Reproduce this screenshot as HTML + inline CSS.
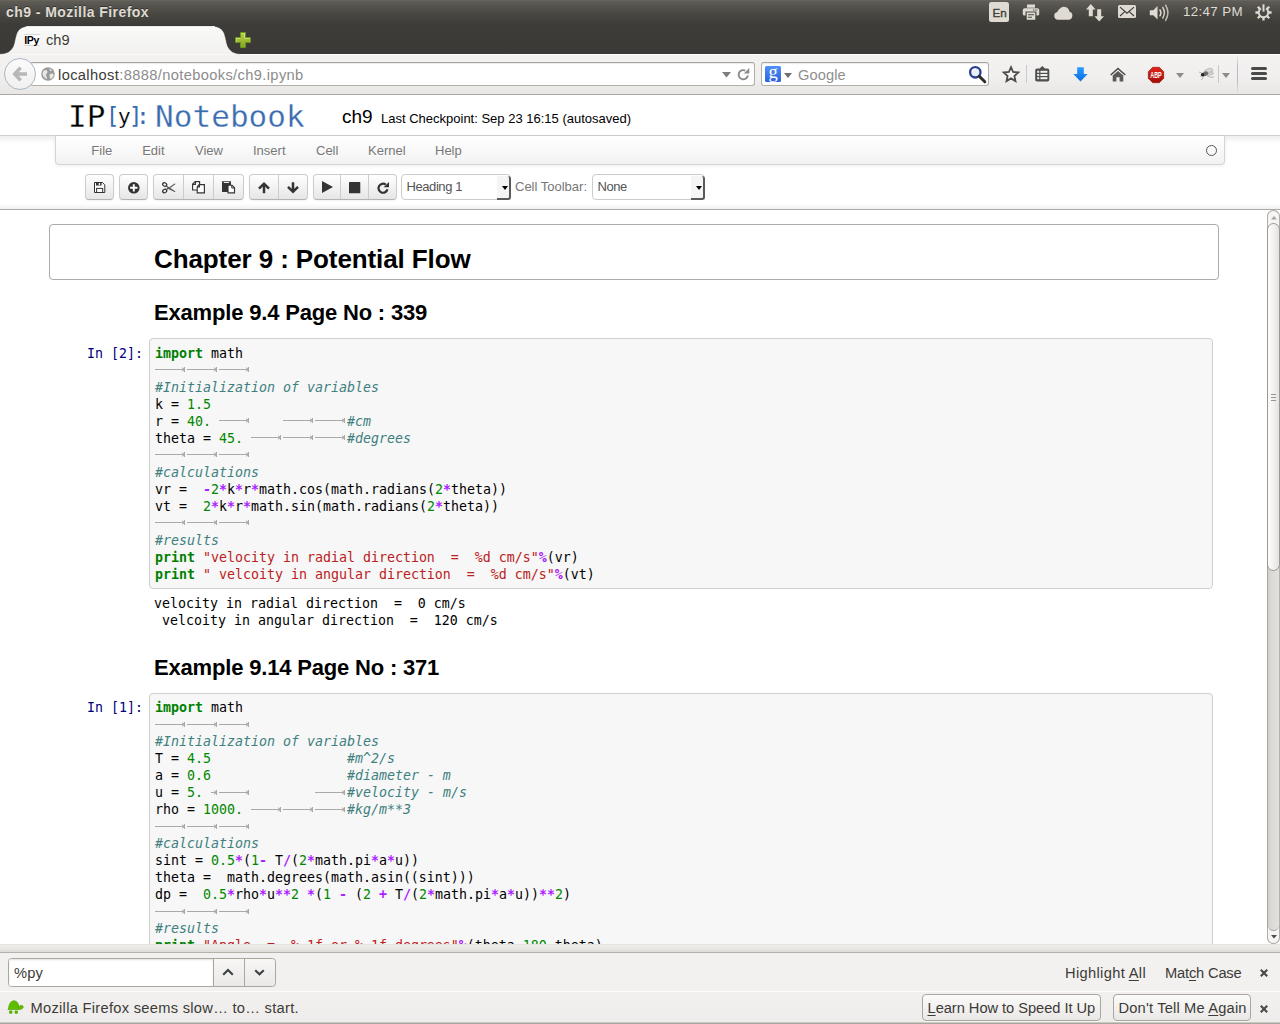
<!DOCTYPE html>
<html><head><meta charset="utf-8"><title>ch9</title>
<style>
*{box-sizing:border-box;margin:0;padding:0}
html,body{width:1280px;height:1024px;overflow:hidden;background:#fff}
body{position:relative;font-family:"Liberation Sans",sans-serif;font-size:13px;color:#000}
.abs{position:absolute}
.ui{font-family:"DejaVu Sans","Liberation Sans",sans-serif}
/* ---------- OS / browser chrome ---------- */
.u{font-family:"Liberation Sans",sans-serif;font-size:14.67px;line-height:18px;white-space:nowrap;z-index:6}
#titlebar{left:0;top:0;width:1280px;height:25px;background:linear-gradient(#69675e 0,#5e5c55 1.5px,#55534d 25%,#45443f 65%,#3e3d39 95%,#3c3b37);z-index:2}
#title{left:6px;top:3px;font-size:14px;color:#dfdbd2;font-weight:bold;letter-spacing:.44px;text-shadow:0 -1px 0 rgba(0,0,0,.4)}
#tabbar{left:0;top:25px;width:1280px;height:29px;background:linear-gradient(#3d3c38,#3a3935);z-index:2}
#tabsvg{left:0;top:24px;z-index:3}
#navbar{left:0;top:54px;width:1280px;height:41px;background:linear-gradient(#fdfdfd 0,#fdfdfd 1px,#f3f2f1 1px,#f0efed 60%,#e9e7e5);border-bottom:1px solid #aca8a3;z-index:2}
.field{top:62px;height:24px;background:#fff;border:1px solid #b3afa9;border-top-color:#a7a39d;border-radius:3px;z-index:3;box-shadow:inset 0 1px 1px rgba(0,0,0,.08)}
#backbtn{left:4px;top:58px;width:32px;height:32px;border-radius:50%;border:1px solid #a9b7c4;background:linear-gradient(#fbfbfb,#f1f0ef);z-index:4}
.ci{z-index:6;overflow:visible}
.sep{width:1px;background:#c5c2bd;z-index:5}
/* ---------- notebook header ---------- */
#header{left:0;top:95px;width:1280px;height:115px;background:#fff;border-bottom:1px solid #ababab;box-shadow:inset 0 -6px 6px -6px rgba(0,0,0,.14)}
#hline{left:0;top:135px;width:1280px;height:8px;border-top:1px solid #cfcfcf;background:linear-gradient(rgba(0,0,0,.07),rgba(0,0,0,0));z-index:2}
.lg{font-family:"DejaVu Sans Mono",monospace;white-space:nowrap;z-index:3}
.lg1{font-size:31px;line-height:36px;top:97.5px;-webkit-text-stroke:0.28px #fff}
.lg2{font-size:23px;line-height:28px;top:102.2px;letter-spacing:-2.3px}
.b{color:#3a6cb0}
#nbname{left:342px;top:106px;font-size:19px;line-height:22px;z-index:3}
#ckpt{left:381px;top:111px;font-size:13px;line-height:15px;z-index:3;white-space:nowrap}
#menubar{left:55px;top:136px;width:1170px;height:29px;border:1px solid #d4d4d4;border-top:none;border-radius:0 0 4px 4px;background:linear-gradient(#fff,#f2f2f2);box-shadow:0 1px 4px rgba(0,0,0,.065);z-index:3}
.menu{top:143px;font-size:13px;line-height:15px;color:#777;white-space:nowrap;z-index:4;text-shadow:0 1px 0 #fff}
#kern{left:1206px;top:144.7px;width:11.4px;height:11.4px;border:1.7px solid #555;border-radius:50%;z-index:4}
.btn{top:174px;height:26px;border:1px solid #ccc;border-bottom-color:#b3b3b3;border-radius:4px;background:linear-gradient(#fff,#e6e6e6);box-shadow:inset 0 1px 0 rgba(255,255,255,.2),0 1px 2px rgba(0,0,0,.05);z-index:3}
.bdiv{top:175px;width:1px;height:24px;background:#ccc;z-index:4}
.ico{z-index:5;overflow:visible}
.sel{top:174px;height:26px;border:1px solid #ccc;border-radius:4px;background:#fff;z-index:3;font-size:13px;line-height:24px;color:#555;padding-left:4.5px;white-space:nowrap;letter-spacing:-0.42px}
.sel:before{content:"";position:absolute;right:-1px;top:1px;width:12px;height:22px;background:#f5f5f5;border-right:2px solid #5a5a5a;border-bottom:2px solid #5a5a5a;border-radius:0 3px 3px 0}
.sel:after{content:"";position:absolute;right:2.5px;top:10.5px;border:3.2px solid transparent;border-top:4.2px solid #000;border-bottom:none}
#ctlabel{left:515px;top:179px;font-size:13px;line-height:15px;color:#777;z-index:3;white-space:nowrap}
/* ---------- notebook ---------- */
#nb{left:0;top:0;width:1280px;height:944px;overflow:hidden;background:#fff;z-index:0}
#header,#findbar,#notifbar{z-index:2}
#selcell{left:49px;top:224px;width:1170px;height:56px;border:1px solid #ababab;border-radius:4px}
h1,h2{font-family:"Liberation Sans",sans-serif;font-weight:bold;color:#000;white-space:nowrap;line-height:1}
h1{font-size:26px}
h2{font-size:22px}
.prompt{left:87px;width:56px;font-family:"DejaVu Sans Mono",monospace;font-size:13.29px;line-height:17px;color:#000080;white-space:pre}
.inarea{left:149px;width:1064px;border:1px solid #cfcfcf;border-radius:4px;background:#f7f7f7}
pre.code,pre.out{font-family:"DejaVu Sans Mono",monospace;font-size:13.29px;line-height:17px;color:#000;white-space:pre}
pre.code{left:155px}
pre.out{left:154px}
.k{color:#008000;font-weight:bold}
.n{color:#080}
.c{color:#408080;font-style:italic}
.s{color:#ba2121}
.o{color:#a2f;font-weight:bold}
i.t{display:inline-block;height:17px;vertical-align:top;font-style:normal;--y:8px;background:linear-gradient(#a9a9a9,#a9a9a9) right 2px top var(--y)/30px 1px no-repeat,linear-gradient(#a9a9a9,#a9a9a9) right 2px top calc(var(--y) - 2px)/1px 5px no-repeat,linear-gradient(#b4b4b4,#b4b4b4) right 3px top calc(var(--y) - 1px)/1px 3px no-repeat,linear-gradient(#d0d0d0,#d0d0d0) right 4px top calc(var(--y) - 2px)/1px 5px no-repeat}
.c1 i.t{--y:7.3px}
i.t4{width:32px}i.t1{width:8px}
pre,.mono{font-family:"DejaVu Sans Mono","Liberation Mono",monospace}
/* ---------- bottom bars ---------- */
#hstrip{left:0;top:944px;width:1280px;height:9px;background:linear-gradient(#dcd9d5 0,#efeeec 1px,#e9e7e4 50%,#dfdcd8 8px,#b4b0aa 8px);z-index:2}
#findbar{left:0;top:953px;width:1280px;height:38px;background:#f2f1f0;z-index:2}
#notifbar{left:0;top:991px;width:1280px;height:33px;background:linear-gradient(#fcfcfb 0,#fcfcfb 1px,#f1f0ee 1px,#efedeb 31px,#a8a49e 32px);z-index:2}
#findin{left:8px;top:958px;width:268px;height:29px;border:1px solid #aba79f;border-radius:3.5px;background:linear-gradient(#f7f6f5,#ebe9e7);z-index:3;overflow:hidden}
#findin:before{content:"";position:absolute;left:0;top:0;width:204px;height:27px;background:#fff;border-right:1px solid #aba79f;box-shadow:inset 0 1px 2px rgba(0,0,0,.12)}
#findin:after{content:"";position:absolute;left:235px;top:0;width:1px;height:27px;background:#aba79f}
.ubtn{top:994px;height:27px;border:1px solid #aaa69f;border-radius:4px;background:linear-gradient(#fbfbfa,#eae8e6);z-index:3;box-shadow:0 1px 0 rgba(255,255,255,.6)}
.x{font:bold 14px/14px "DejaVu Sans",sans-serif;color:#4b4b4b;z-index:5}
/* ---------- scrollbar ---------- */
#sbtrack{left:1267px;top:210px;width:13px;height:734px;background:linear-gradient(90deg,#d3d0cc,#dddbd8 40%,#e3e1de);border-left:1px solid #a9a59f;border-right:1px solid #b5b1ab;border-radius:7px;z-index:2}
.sbb{left:1267px;width:13px;background:linear-gradient(90deg,#fbfbfa,#f4f3f2 45%,#e4e2df);border:1px solid #9d9992;z-index:3}
u{text-decoration:underline;text-underline-offset:1.5px;text-decoration-thickness:1px}
</style></head><body>
<div id="titlebar" class="abs"></div>
<div id="title" class="abs u">ch9 - Mozilla Firefox</div>
<div class="abs" style="left:989px;top:2px;width:20px;height:20px;background:#dfdbd2;border-radius:2.5px;z-index:5"></div>
<div class="abs u" style="left:992.6px;top:5px;font-size:11.6px;line-height:16px;color:#3c3b37;letter-spacing:-.2px;-webkit-text-stroke:.35px #3c3b37">En</div>
<svg class="abs ci" style="left:1022px;top:4px" width="18" height="16" viewBox="0 0 18 16"><g fill="#dfdbd2"><rect x="5" y=".5" width="8" height="3.2"/><path d="M2.6 4.3H15.4Q17.2 4.3 17.2 6.1V10.2Q17.2 11.5 15.4 11.5H14.5V7.5H3.5V11.5H2.6Q.8 11.5 .8 10.2V6.1Q.8 4.3 2.6 4.3Z"/><path d="M4.7 8.6H13.3V15.7H4.7ZM6 10.2V11.3H12V10.2ZM6 12.7V13.8H10V12.7Z" fill-rule="evenodd"/></g><g fill="#3c3b37"><rect x="11" y="5.5" width="1" height="1"/><rect x="12.7" y="5.5" width="1" height="1"/><rect x="14.4" y="5.5" width="1" height="1"/></g></svg>
<svg class="abs ci" style="left:1054px;top:4.5px" width="19" height="15" viewBox="0 0 19 15"><path d="M4 14.8A3.9 3.9 0 0 1 3.3 7.1A4.2 4.2 0 0 1 5.2 4.3A5.6 5.6 0 0 1 15.4 6.6A4.2 4.2 0 0 1 14.5 14.8Z" fill="#dfdbd2"/></svg>
<svg class="abs ci" style="left:1086px;top:3.5px" width="19" height="18" viewBox="0 0 19 18"><path d="M4.8 0L9.6 5.4H6.8V12.3H2.8V5.4H0ZM13.2 17.6L8.4 12.2H11.2V5.3H15.2V12.2H18Z" fill="#dfdbd2"/></svg>
<svg class="abs ci" style="left:1118px;top:5px" width="18" height="13" viewBox="0 0 18 13"><rect width="18" height="13" rx="1.5" fill="#dfdbd2"/><path d="M2 2.2L9 8.2L16 2.2M2 11L6.8 6.6M16 11L11.2 6.6" fill="none" stroke="#3c3b37" stroke-width="1.1"/></svg>
<svg class="abs ci" style="left:1149px;top:3.5px" width="21" height="18" viewBox="0 0 21 18"><path d="M.8 6.2H4.3L8.5 2V15.5L4.3 11.3H.8Z" fill="#dfdbd2"/><g fill="none" stroke="#dfdbd2" stroke-width="1.5" stroke-linecap="round"><path d="M11 5.8Q12.8 8.8 11 11.8"/><path d="M13.8 3.5Q17 8.8 13.8 14" opacity=".9"/><path d="M16.6 1.2Q21.2 8.8 16.6 16.4" opacity=".8"/></g></svg>
<div class="abs u" style="left:1183px;top:3px;font-size:13.33px;color:#dfdbd2;letter-spacing:.35px">12:47 PM</div>
<svg class="abs ci" style="left:1255.4px;top:3.5px" width="17" height="17" viewBox="0 0 17 17"><g fill="none" stroke="#dfdbd2"><path d="M11.04 4.43A4.8 4.8 0 1 1 5.96 4.43" stroke-width="2"/><path d="M12.25 4.75L14.23 2.77M13.80 8.50L16.60 8.50M12.25 12.25L14.23 14.23M8.50 13.80L8.50 16.60M4.75 12.25L2.77 14.23M3.20 8.50L0.40 8.50M4.75 4.75L2.77 2.77" stroke-width="2.3"/><path d="M8.5 .3V7.6" stroke-width="2"/></g></svg>
<div id="tabbar" class="abs"></div>
<svg id="tabsvg" class="abs" width="260" height="31" viewBox="0 0 260 31"><defs><linearGradient id="tg" x1="0" y1="0" x2="0" y2="1"><stop offset="0" stop-color="#fcfcfb"/><stop offset=".15" stop-color="#f8f8f7"/><stop offset="1" stop-color="#f2f1f0"/></linearGradient><linearGradient id="pg" x1="0" y1="0" x2="0" y2="1"><stop offset="0" stop-color="#b4d24a"/><stop offset="1" stop-color="#86a71f"/></linearGradient></defs>
<path d="M-1 30.5V29.8H1C9 29.6 13 25 14.3 19C15 16 15.5 13 16.5 10C18 5.5 22 2.2 29 2.2H212C219 2.2 223 5.5 224.5 10C225.5 13 226 16 226.7 19C228 25 232 29.6 240 29.8V30.5Z" fill="url(#tg)"/>
<path d="M-1 29.8H1C9 29.6 13 25 14.3 19C15 16 15.5 13 16.5 10C18 5.5 22 2.2 29 2.2H212C219 2.2 223 5.5 224.5 10C225.5 13 226 16 226.7 19C228 25 232 29.6 240 29.8" fill="none" stroke="#2b2a27" stroke-width="1" opacity=".5"/>
<path d="M26 2.7H215" stroke="#fff" stroke-width="1"/>
<path d="M240.5 8.5h5v5h5v5h-5v5h-5v-5h-5v-5h5Z" fill="url(#pg)" stroke="#6c9320" stroke-width="1"/><path d="M241.5 9.5h3v5h5M236.5 17.5v-3h4" fill="none" stroke="#d6ea8c" stroke-width=".9" opacity=".75"/></svg>
<div class="abs" style="left:24px;top:34px;width:16px;height:12px;background:#fff;border-top:1px solid #d8d8d8;border-bottom:1px solid #d8d8d8;z-index:5"></div>
<div class="abs" style="left:24.3px;top:34.6px;font:bold 10.6px/11px 'Liberation Sans',sans-serif;letter-spacing:-.45px;color:#000;z-index:6">IPy</div>
<div class="abs u" style="left:46px;top:30.5px;color:#3c3b37">ch9</div>
<div id="navbar" class="abs"></div>
<div class="abs field" style="left:30px;width:725px"></div>
<div class="abs field" style="left:761px;width:228px"></div>
<div id="backbtn" class="abs"></div>
<svg class="abs ci" style="left:13px;top:67px" width="14" height="14" viewBox="0 0 14 14"><path d="M7.6 .6L1.8 7L7.6 13.4M2.5 7H14" fill="none" stroke="#b7b7b7" stroke-width="3.6"/></svg>
<svg class="abs ci" style="left:41px;top:67px" width="14" height="14" viewBox="0 0 14 14"><circle cx="7" cy="7" r="6.8" fill="#9a9a9a"/><path d="M3 3.5C4.5 2.5 6 3 6.5 4.5C7 6 5 6.5 5 8C5 9.5 6.5 10 6 12C4 11.5 2 9.5 1.5 7.5C1.5 6 2 4.5 3 3.5ZM8.5 1.5C10 2 11 3 10.5 4C9.5 4.5 8.5 3.5 8.5 1.5ZM9 7C10.5 6 12.5 6.5 12.8 8C12.5 10 11 11.5 9.5 12C8.5 10.5 8 8 9 7Z" fill="#e6e6e6"/></svg>
<div class="abs u" style="left:58px;top:65.7px;letter-spacing:.37px;color:#8c8c8c"><span style="color:#3c3b37">localhost</span>:8888/notebooks/ch9.ipynb</div>
<svg class="abs ci" style="left:722px;top:72px" width="9" height="6" viewBox="0 0 9 6"><path d="M0 0H9L4.5 5.5Z" fill="#7d7d7d"/></svg>
<svg class="abs ci" style="left:737px;top:67.5px" width="13" height="13" viewBox="0 0 13 13"><path d="M10.8 7.3A4.6 4.6 0 1 1 8.3 2.6" fill="none" stroke="#8a8a8a" stroke-width="1.9"/><path d="M6.8 5.5H12.3V0Z" fill="#8a8a8a"/></svg>
<div class="abs" style="left:765px;top:66px;width:16px;height:16px;background:linear-gradient(#4f8ff7,#2d62dd);border-radius:1.5px;z-index:5"></div>
<div class="abs" style="left:768.6px;top:62.6px;font:normal 18.5px/19px 'Liberation Serif',serif;color:#fff;z-index:6">g</div>
<svg class="abs ci" style="left:784px;top:72.5px" width="8" height="5" viewBox="0 0 8 5"><path d="M0 0H8L4 5Z" fill="#6d6d6d"/></svg>
<div class="abs u" style="left:798px;top:65.7px;color:#8f8f8f;letter-spacing:.1px">Google</div>
<svg class="abs ci" style="left:968px;top:65px" width="19" height="19" viewBox="0 0 19 19"><circle cx="7.3" cy="7.3" r="5.2" fill="#e9eef8" stroke="#2a3f8f" stroke-width="2.3"/><path d="M11.3 11.3L16.8 16.8" stroke="#2b2b2b" stroke-width="3" stroke-linecap="round"/><path d="M4.3 6.5A3.2 3.2 0 0 1 8 4.2" fill="none" stroke="#fff" stroke-width="1.2"/></svg>
<svg class="abs ci" style="left:1002px;top:65px" width="18" height="18" viewBox="0 0 18 18"><path d="M9 2.2L11.1 7L16.3 7.5L12.4 11L13.5 16.1L9 13.4L4.5 16.1L5.6 11L1.7 7.5L6.9 7Z" fill="#f6f5f4" stroke="#4c4c4c" stroke-width="1.8" stroke-linejoin="miter"/></svg>
<div class="abs sep" style="left:1026px;top:65px;height:18px;background:#c6ccd4"></div>
<svg class="abs ci" style="left:1035px;top:65.5px" width="15" height="16" viewBox="0 0 15 16"><path d="M7.3 0L10 2.6H12.5Q14.3 2.6 14.3 4.4V13.7Q14.3 15.5 12.5 15.5H2Q.2 15.5 .2 13.7V4.4Q.2 2.6 2 2.6H4.6Z" fill="#4f4f4f"/><g fill="#f2f1f0"><rect x="2.2" y="4.8" width="2" height="2"/><rect x="5.4" y="4.8" width="7" height="2"/><rect x="2.2" y="8" width="2" height="2"/><rect x="5.4" y="8" width="7" height="2"/><rect x="2.2" y="11.2" width="2" height="2"/><rect x="5.4" y="11.2" width="7" height="2"/></g></svg>
<svg class="abs ci" style="left:1072.5px;top:67px" width="15" height="15" viewBox="0 0 15 15"><defs><linearGradient id="dg" x1="0" y1="0" x2="0" y2="1"><stop offset="0" stop-color="#2a9bff"/><stop offset="1" stop-color="#0a6fe0"/></linearGradient></defs><path d="M4.2 .3H10.8V7H14.7L7.5 14.4L.3 7H4.2Z" fill="url(#dg)"/></svg>
<svg class="abs ci" style="left:1110px;top:66.5px" width="16" height="15" viewBox="0 0 16 15"><path d="M8 .4L15.8 7.4L14.8 8.5L8 2.5L1.2 8.5L.2 7.4Z" fill="#4a4a4a"/><path d="M8 3.9L13.3 8.5V14.6H9.6V10.2H6.4V14.6H2.7V8.5Z" fill="#5a5a5a"/></svg>
<svg class="abs ci" style="left:1148px;top:66.5px" width="16" height="16" viewBox="0 0 16 16"><defs><linearGradient id="ag" x1="0" y1="0" x2="0" y2="1"><stop offset="0" stop-color="#e2231a"/><stop offset="1" stop-color="#a50d08"/></linearGradient></defs><path d="M4.7 .3H11.3L15.7 4.7V11.3L11.3 15.7H4.7L.3 11.3V4.7Z" fill="url(#ag)" stroke="#8e0b07" stroke-width=".6"/><text x="8" y="11.1" font-family="Liberation Sans, sans-serif" font-weight="bold" font-size="8.6" text-anchor="middle" fill="#fff" textLength="11.6" lengthAdjust="spacingAndGlyphs">ABP</text></svg>
<svg class="abs ci" style="left:1175.5px;top:73px" width="8" height="5" viewBox="0 0 8 5"><path d="M0 0H8L4 5Z" fill="#8c8c8c"/></svg>
<svg class="abs ci" style="left:1198px;top:67px" width="17" height="14" viewBox="0 0 17 14"><g fill="none" stroke="#9a9a9a" stroke-width=".7"><path d="M1 5L5 6.5M2 9.5L5 7.5M3.5 13L6 8.5M9 9L14 10.5L16 9.5M10 6L15 7"/></g><ellipse cx="10.5" cy="4" rx="4.5" ry="2.3" transform="rotate(-20 10.5 4)" fill="#d9d9d9" stroke="#a8a8a8" stroke-width=".6"/><ellipse cx="12" cy="6.5" rx="3.5" ry="1.6" transform="rotate(-10 12 6.5)" fill="#cfcfcf" stroke="#aaa" stroke-width=".5"/><ellipse cx="7.3" cy="6.8" rx="3" ry="2.2" transform="rotate(-25 7.3 6.8)" fill="#6f6f6f"/><circle cx="4.6" cy="7.8" r="1.7" fill="#222"/></svg>
<div class="abs sep" style="left:1218px;top:65px;height:18px;background:#c4c8cd"></div>
<svg class="abs ci" style="left:1221.5px;top:73px" width="8" height="5" viewBox="0 0 8 5"><path d="M0 0H8L4 5Z" fill="#8c8c8c"/></svg>
<div class="abs sep" style="left:1237px;top:55px;height:38px;background:linear-gradient(rgba(170,180,195,.1),#b4bdc9 30%,#b4bdc9 70%,rgba(170,180,195,.1))"></div>
<div class="abs" style="left:1251px;top:67px;width:16px;height:3px;border-radius:1.5px;background:#4a4a4a;box-shadow:0 5px 0 #4a4a4a,0 10px 0 #4a4a4a;z-index:5"></div>
<div id="header" class="abs"></div>
<div id="hline" class="abs"></div>
<div class="abs lg lg1" style="left:68px">IP</div>
<div class="abs lg lg2" style="left:105.7px"><span class="b">[</span><span style="font-size:21.5px;margin:0 .45px;-webkit-text-stroke:.2px #fff">y</span><span class="b">]</span></div>
<div class="abs lg lg2 b" style="left:136px">:</div>
<div class="abs lg lg1 b" style="left:155px;letter-spacing:0.06px">Notebook</div>
<div id="nbname" class="abs">ch9</div>
<div id="ckpt" class="abs">Last Checkpoint: Sep 23 16:15 (autosaved)</div>
<div id="menubar" class="abs"></div>
<div class="abs menu" style="left:91.3px">File</div><div class="abs menu" style="left:142.2px">Edit</div><div class="abs menu" style="left:195px">View</div><div class="abs menu" style="left:253px">Insert</div><div class="abs menu" style="left:316px">Cell</div><div class="abs menu" style="left:368px">Kernel</div><div class="abs menu" style="left:435px">Help</div>
<div id="kern" class="abs"></div>
<div class="abs btn" style="left:85px;width:29px"></div><div class="abs btn" style="left:119px;width:29px"></div><div class="abs btn" style="left:153px;width:91px"></div><div class="abs btn" style="left:249px;width:59px"></div><div class="abs btn" style="left:313px;width:84px"></div><div class="abs bdiv" style="left:183px"></div><div class="abs bdiv" style="left:213px"></div><div class="abs bdiv" style="left:278px"></div><div class="abs bdiv" style="left:340px"></div><div class="abs bdiv" style="left:368px"></div>
<svg class="abs ico" style="left:94px;top:182px" width="12" height="12" viewBox="0 0 12 12"><path d="M0.5 0.5H8.4L10.8 2.9V10.5H0.5Z" fill="#fbfbfb" stroke="#333" stroke-width="1"/><path d="M2 0.5H7.6V3.6H2ZM4.7 1H6.1V3H4.7Z" fill="#333" fill-rule="evenodd"/><rect x="2.6" y="6.4" width="6.1" height="4.1" fill="none" stroke="#333" stroke-width="1"/></svg>
<svg class="abs ico" style="left:127.6px;top:181.5px" width="11.6" height="11.6" viewBox="0 0 12 12"><circle cx="6" cy="6" r="6" fill="#333"/><path d="M5 2.2h2v2.8h2.8v2H7v2.8H5V7H2.2V5H5Z" fill="#fff"/></svg>
<svg class="abs ico" style="left:161.5px;top:182px" width="14" height="11.5" viewBox="0 0 14 11.5"><g fill="none" stroke="#333" stroke-width="1.25"><ellipse cx="2.7" cy="2.5" rx="2.1" ry="1.7" transform="rotate(25 2.7 2.5)"/><ellipse cx="2.7" cy="9" rx="2.1" ry="1.7" transform="rotate(-25 2.7 9)"/></g><path d="M4.4 3.6L13.6 9.6 12.6 10 6.4 6.9 4.6 8 4 7.2 5.6 5.8 3.9 4.5ZM7.3 5.2L12.6 1.5 13.6 1.9 8.3 5.9Z" fill="#555"/></svg>
<svg class="abs ico" style="left:192px;top:181px" width="13" height="12.5" viewBox="0 0 13 12.5"><g fill="#fcfcfc" stroke="#333" stroke-width="1.15"><path d="M0.6 3.2L3.2 0.6H7.6V9H0.6Z"/><path d="M0.6 3.4H3.4V0.6" fill="none"/><path d="M5.2 5.8L7.2 3.6H12.4V11.9H5.2Z"/><path d="M5.2 5.8H7.4V3.6" fill="none"/></g></svg>
<svg class="abs ico" style="left:222px;top:181px" width="13" height="12.5" viewBox="0 0 13 12.5"><path d="M0 0.2H9V4H6V11H0Z" fill="#333"/><path d="M1.8 1.5H7.2" stroke="#fff" stroke-width=".9"/><path d="M6 4.2H10L12.5 6.8V11.9H6Z" fill="#fcfcfc" stroke="#333" stroke-width="1.15"/><path d="M9.8 4.2V7H12.5" fill="none" stroke="#333" stroke-width="1"/></svg>
<svg class="abs ico" style="left:258px;top:182px" width="12" height="11.5" viewBox="0 0 12 11.5"><path d="M1 6.6L6 1.7L11 6.6M6 2.4V11.3" fill="none" stroke="#333" stroke-width="2.5"/></svg>
<svg class="abs ico" style="left:287.3px;top:182px" width="12" height="11.5" viewBox="0 0 12 11.5"><path d="M1 4.9L6 9.8L11 4.9M6 9.1V0.2" fill="none" stroke="#333" stroke-width="2.5"/></svg>
<svg class="abs ico" style="left:321.5px;top:181.3px" width="11" height="12" viewBox="0 0 11 12"><path d="M0 0L11 6 0 12Z" fill="#333"/></svg>
<svg class="abs ico" style="left:349px;top:181.8px" width="11.3" height="11.4" viewBox="0 0 11 11"><rect width="11" height="11" rx=".6" fill="#333"/></svg>
<svg class="abs ico" style="left:376.5px;top:181.5px" width="12" height="12" viewBox="0 0 12 12"><path d="M10.4 7.2A4.5 4.5 0 1 1 8.8 2.7" fill="none" stroke="#333" stroke-width="2.2"/><path d="M6.6 5.2H12V0Z" fill="#333"/></svg>

<div class="abs sel" style="left:401px;width:110px">Heading 1</div>
<div id="ctlabel" class="abs">Cell Toolbar:</div>
<div class="abs sel" style="left:592px;width:113px">None</div>
<div id="nb" class="abs">
<div class="abs" id="selcell"></div>
<h1 class="abs" style="left:154px;top:246px;letter-spacing:-.1px">Chapter 9 : Potential Flow</h1>
<h2 class="abs" style="left:154px;top:302px;letter-spacing:-.18px">Example 9.4 Page No : 339</h2>
<div class="abs prompt" style="top:345px">In [2]:</div>
<div class="abs inarea" style="top:338px;height:251px"></div>
<pre class="abs code c1" style="top:344.5px"><span class="k">import</span> math
<i class="t t4"></i><i class="t t4"></i><i class="t t4"></i>
<span class="c">#Initialization of variables</span>
k = <span class="n">1.5</span>
r = <span class="n">40.</span> <i class="t t4"></i>    <i class="t t4"></i><i class="t t4"></i><span class="c">#cm</span>
theta = <span class="n">45.</span> <i class="t t4"></i><i class="t t4"></i><i class="t t4"></i><span class="c">#degrees</span>
<i class="t t4"></i><i class="t t4"></i><i class="t t4"></i>
<span class="c">#calculations</span>
vr =  <span class="o">-</span><span class="n">2</span><span class="o">*</span>k<span class="o">*</span>r<span class="o">*</span>math.cos(math.radians(<span class="n">2</span><span class="o">*</span>theta))
vt =  <span class="n">2</span><span class="o">*</span>k<span class="o">*</span>r<span class="o">*</span>math.sin(math.radians(<span class="n">2</span><span class="o">*</span>theta))
<i class="t t4"></i><i class="t t4"></i><i class="t t4"></i>
<span class="c">#results</span>
<span class="k">print</span> <span class="s">"velocity in radial direction  =  %d cm/s"</span><span class="o">%</span>(vr)
<span class="k">print</span> <span class="s">" velcoity in angular direction  =  %d cm/s"</span><span class="o">%</span>(vt)</pre>
<pre class="abs out" style="top:595px">velocity in radial direction  =  0 cm/s
 velcoity in angular direction  =  120 cm/s</pre>
<h2 class="abs" style="left:154px;top:657px;letter-spacing:-.18px">Example 9.14 Page No : 371</h2>
<div class="abs prompt" style="top:699px">In [1]:</div>
<div class="abs inarea" style="top:693px;height:260px"></div>
<pre class="abs code" style="top:699px"><span class="k">import</span> math
<i class="t t4"></i><i class="t t4"></i><i class="t t4"></i>
<span class="c">#Initialization of variables</span>
T = <span class="n">4.5</span>                 <span class="c">#m^2/s</span>
a = <span class="n">0.6</span>                 <span class="c">#diameter - m</span>
u = <span class="n">5.</span> <i class="t t1"></i><i class="t t4"></i>        <i class="t t4"></i><span class="c">#velocity - m/s</span>
rho = <span class="n">1000.</span> <i class="t t4"></i><i class="t t4"></i><i class="t t4"></i><span class="c">#kg/m**3</span>
<i class="t t4"></i><i class="t t4"></i><i class="t t4"></i>
<span class="c">#calculations</span>
sint = <span class="n">0.5</span><span class="o">*</span>(<span class="n">1</span><span class="o">-</span> T<span class="o">/</span>(<span class="n">2</span><span class="o">*</span>math.pi<span class="o">*</span>a<span class="o">*</span>u))
theta =  math.degrees(math.asin((sint)))
dp =  <span class="n">0.5</span><span class="o">*</span>rho<span class="o">*</span>u<span class="o">**</span><span class="n">2</span> <span class="o">*</span>(<span class="n">1</span> <span class="o">-</span> (<span class="n">2</span> <span class="o">+</span> T<span class="o">/</span>(<span class="n">2</span><span class="o">*</span>math.pi<span class="o">*</span>a<span class="o">*</span>u))<span class="o">**</span><span class="n">2</span>)
<i class="t t4"></i><i class="t t4"></i><i class="t t4"></i>
<span class="c">#results</span>
<span class="k">print</span> <span class="s">"Angle  =  %.1f or %.1f degrees"</span><span class="o">%</span>(theta,<span class="n">180</span><span class="o">-</span>theta)</pre>
</div><!--/nb-->
<div id="hstrip" class="abs"></div>
<div id="findbar" class="abs"></div>
<div id="findin" class="abs"></div>
<div class="abs u" style="left:14px;top:963.5px;color:#3c3b37;letter-spacing:.2px">%py</div>
<svg class="abs ci" style="left:222px;top:968px" width="12" height="8" viewBox="0 0 12 8"><path d="M1.2 6.8L6 2L10.8 6.8" fill="none" stroke="#3d4043" stroke-width="2.1"/></svg>
<svg class="abs ci" style="left:254px;top:969px" width="11" height="7" viewBox="0 0 11 7"><path d="M1.2 1.2L5.5 5.3L9.8 1.2" fill="none" stroke="#3d4043" stroke-width="2.1"/></svg>
<div class="abs u" style="left:1065px;top:964px;color:#3c3b37;letter-spacing:.34px">Highlight <u>A</u>ll</div>
<div class="abs u" style="left:1165px;top:964px;color:#3c3b37;letter-spacing:-.17px">Mat<u>c</u>h Case</div>
<svg class="abs ci" style="left:1260px;top:969px" width="8" height="8" viewBox="0 0 8 8"><path d="M.8 .8L7.2 7.2M7.2 .8L.8 7.2" stroke="#4a4a4a" stroke-width="2.2"/></svg>
<div id="notifbar" class="abs"></div>
<svg class="abs ci" style="left:7px;top:1000px" width="17" height="14.5" viewBox="0 0 17 14.5"><path d="M0 9.8L2.2 8.4V9.9Z" fill="#5ab300"/><path d="M1.6 9.6C1.4 4.3 4 .8 7 .8C10 .8 12.4 4.3 12.3 9.6Z" fill="#5fbd00" stroke="#50a400" stroke-width=".7"/><ellipse cx="13.9" cy="7.4" rx="2.5" ry="1.9" transform="rotate(-25 13.9 7.4)" fill="#5fbd00" stroke="#50a400" stroke-width=".5"/><rect x="2.1" y="10.6" width="3.3" height="3.2" rx="1.1" fill="#57b000"/><rect x="7.6" y="10.6" width="3.3" height="3.2" rx="1.1" fill="#57b000"/></svg>
<div class="abs u" style="left:30.5px;top:998.5px;color:#3c3b37;letter-spacing:.29px">Mozilla Firefox seems slow… to… start.</div>
<div class="abs ubtn" style="left:922px;width:179px"></div>
<div class="abs u" style="left:927.5px;top:999px;color:#3c3b37;letter-spacing:-.04px"><u>L</u>earn How to Speed It Up</div>
<div class="abs ubtn" style="left:1113px;width:138px"></div>
<div class="abs u" style="left:1118.5px;top:999px;color:#3c3b37;letter-spacing:.18px">Don't Tell Me <u>A</u>gain</div>
<svg class="abs ci" style="left:1260px;top:1004.5px" width="8" height="8" viewBox="0 0 8 8"><path d="M.8 .8L7.2 7.2M7.2 .8L.8 7.2" stroke="#4a4a4a" stroke-width="2.2"/></svg>
<div id="sbtrack" class="abs"></div>
<div class="abs sbb" style="top:210px;height:21px;border-radius:6.5px 6.5px 0 0;border-bottom:none;background:#f6f5f4;border-color:#b0aca6"></div>
<div class="abs sbb" style="top:927px;height:17px;border-radius:0 0 6.5px 6.5px;border-top:none;background:#f6f5f4;border-color:#b0aca6"></div>
<div class="abs" style="left:1268px;top:916px;width:11px;height:15px;border-radius:0 0 5.5px 5.5px;background:linear-gradient(90deg,#d3d0cc,#dddbd8 40%,#e3e1de);border-bottom:1px solid #a9a59f;z-index:4"></div>
<div class="abs sbb" style="top:223px;height:348px;border-radius:6.5px;z-index:4"></div>
<svg class="abs ci" style="left:1270.5px;top:215.5px" width="6" height="3.5" viewBox="0 0 6 3.5"><path d="M0 3.5H6L3 0Z" fill="#a9a59f"/></svg>
<svg class="abs ci" style="left:1270.5px;top:934.8px" width="6" height="3.5" viewBox="0 0 6 3.5"><path d="M0 0H6L3 3.5Z" fill="#4f4d4a"/></svg>
<div class="abs" style="left:1271px;top:394px;width:5px;height:1px;background:#98948e;box-shadow:0 3px 0 #98948e,0 6px 0 #98948e;z-index:5"></div>
</body></html>
